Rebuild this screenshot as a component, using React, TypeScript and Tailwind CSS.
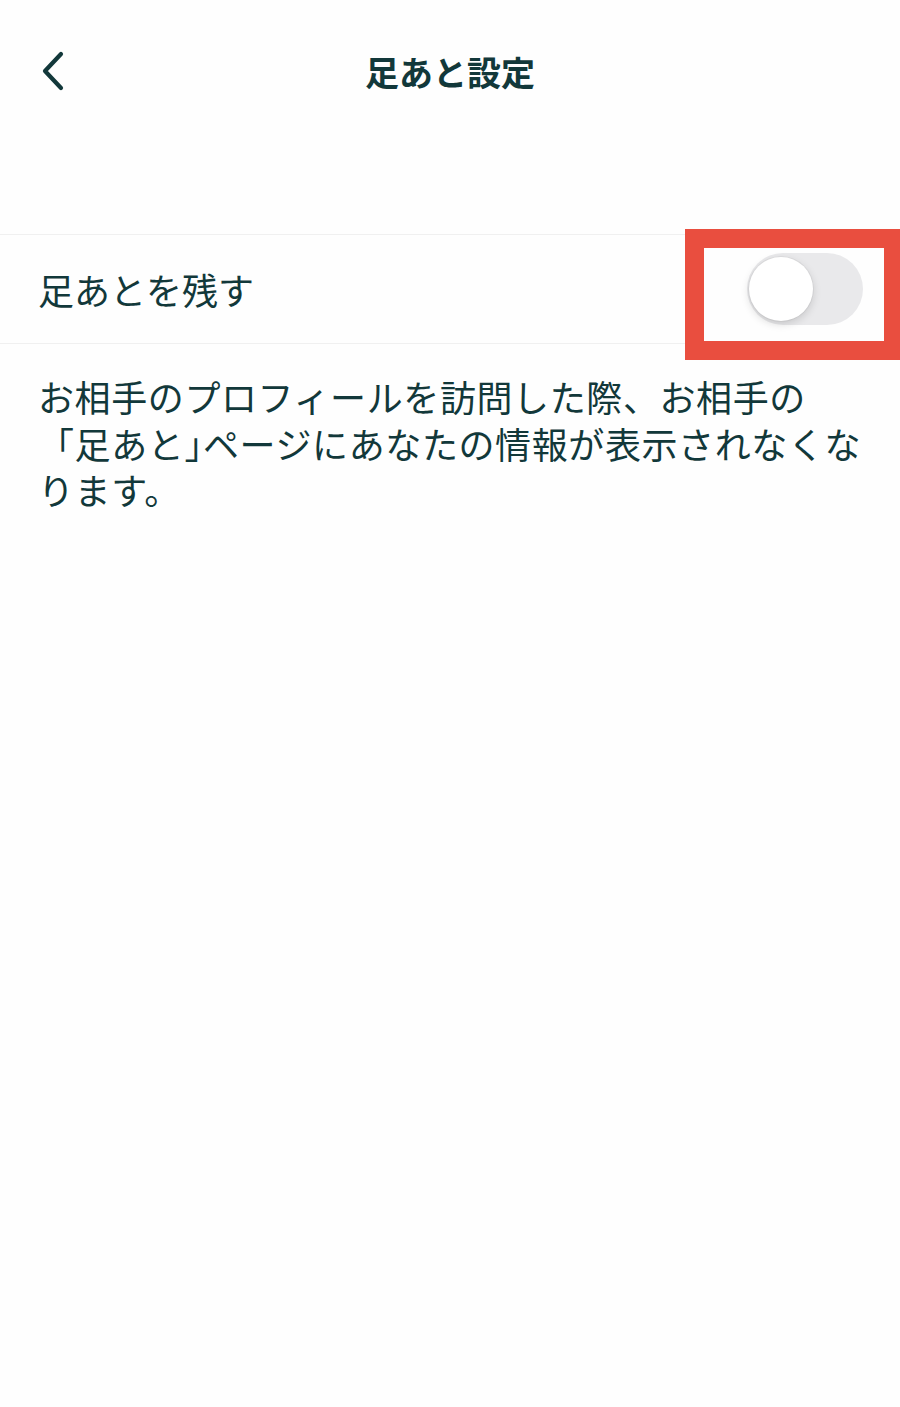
import React, { useState } from "react";

const font = { fontFamily: '"Noto Sans CJK JP", "Noto Sans", sans-serif' };

function BackIcon() {
  return (
    <svg width="24" height="40" viewBox="0 0 24 40" fill="none">
      <path
        d="M20 3 L4 20 L20 37"
        stroke="#12383a"
        strokeWidth="4.2"
        strokeLinecap="round"
        strokeLinejoin="round"
      />
    </svg>
  );
}

function Toggle({ on, onChange }: { on: boolean; onChange: (v: boolean) => void }) {
  return (
    <button
      type="button"
      onClick={() => onChange(!on)}
      className={`flex h-[72px] w-[116px] items-center rounded-full p-[2px] ${
        on ? "justify-end bg-[#34c759]" : "justify-start bg-[#e9e9eb]"
      }`}
    >
      <span className="h-[64px] w-[64px] rounded-full bg-white shadow-[0_3px_8px_rgba(0,0,0,0.15),0_0_0_1px_rgba(0,0,0,0.04)]" />
    </button>
  );
}

export default function App() {
  const [leave, setLeave] = useState(false);

  return (
    <div
      className="min-h-[1407px] w-[900px] overflow-hidden bg-[#fefefe] text-[#12383a]"
      style={font}
    >
      {/* header */}
      <div className="grid h-[144px] grid-cols-[1fr_auto_1fr] items-center">
        <div className="pl-[41px]">
          <button className="block pb-[2px]" aria-label="戻る">
            <BackIcon />
          </button>
        </div>
        <h1 className="text-[34px] font-bold leading-none">足あと設定</h1>
        <div />
      </div>

      <div className="h-[90px]" />

      {/* row */}
      <div className="relative flex h-[110px] items-center justify-between border-y border-[#f0f0f0] pl-[38px] pr-[37px]">
        <span className="text-[36px] leading-none">足あとを残す</span>
        <Toggle on={leave} onChange={setLeave} />
        {/* annotation frame */}
        <div className="pointer-events-none absolute left-[685px] top-[-6px] h-[131px] w-[218px] border-[19px] border-[#e94e3f]" />
      </div>

      {/* description */}
      <p className="whitespace-nowrap pl-[38px] pt-[29px] text-[36px] leading-[46.5px] tracking-[0.6px]">
        お相手のプロフィールを訪問した際、お相手の
        <br />
        「足あと<span className="[font-feature-settings:'halt']">」</span>
        ページにあなたの情報が表示されなくな
        <br />
        ります。
      </p>
    </div>
  );
}
